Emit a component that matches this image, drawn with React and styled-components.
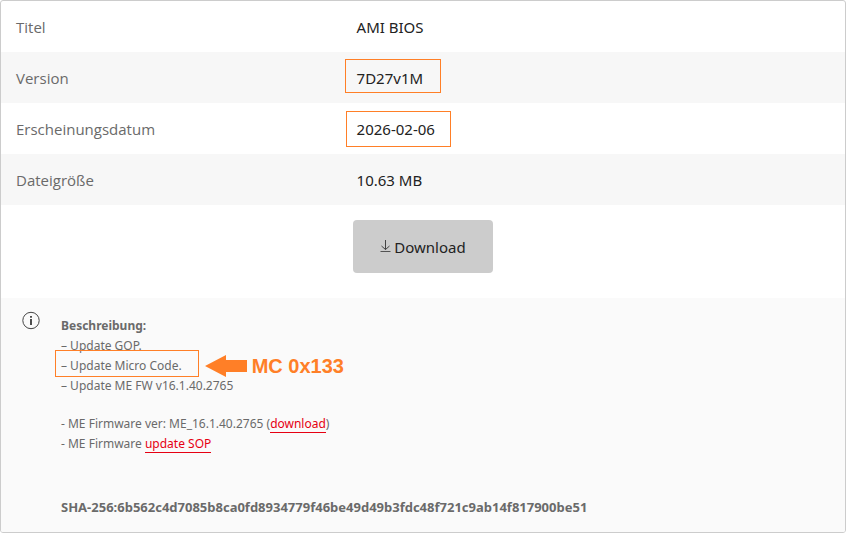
import React from "react"
import styled, { createGlobalStyle } from "styled-components"

const textColor = "#6a6a6a"
const marker = "#ff7f27"

const GlobalStyle = createGlobalStyle`
  * {
    box-sizing: border-box;
  }
  body {
    margin: 0;
    background-color: #fff;
    color: ${textColor};
    font-family: "Noto Sans", "Open Sans", sans-serif;
  }
`

const Card = styled.main`
  border: 1px solid #ccc;
  border-radius: 3px;
  overflow: hidden;
`

const SpecTable = styled.table`
  width: 100%;
  border-collapse: collapse;
  table-layout: fixed;
  font-size: 15px;
  line-height: 21px;
  th,
  td {
    padding: 16px 18px 14px;
    text-align: left;
    font-weight: normal;
  }
  th {
    width: 40%;
    padding-left: 15px;
    font-family: "Open Sans", "Noto Sans", sans-serif;
  }
  td {
    color: #222;
  }
  tr:nth-child(even) {
    background-color: #f7f7f7;
  }
`

const Marked = styled.span`
  position: relative;
  &::after {
    content: "";
    position: absolute;
    inset: ${(props) => props.$inset};
    border: 1px solid ${marker};
    pointer-events: none;
  }
`

const Actions = styled.div`
  display: flex;
  justify-content: center;
  padding: 15px 0 25px;
`

const DownloadButton = styled.button`
  display: flex;
  align-items: center;
  justify-content: center;
  gap: 3px;
  min-width: 140px;
  height: 53px;
  border: 0;
  border-radius: 4px;
  background-color: #ccc;
  color: #222;
  font-family: inherit;
  font-size: 15px;
  cursor: pointer;
`

const Description = styled.section`
  display: flex;
  align-items: flex-start;
  gap: 20px;
  padding: 13px 20px 15px;
  background-color: #fafafa;
  font-size: 12px;
  line-height: 20px;
`

const DescriptionText = styled.div`
  padding-top: 5px;
`

const Heading = styled.h2`
  margin: 0;
  font-size: 12px;
  font-weight: bold;
`

const Lines = styled.ul`
  margin: 0 0 18px;
  padding: 0;
  list-style: none;
`

const TextLink = styled.a`
  color: #e60012;
  text-decoration: none;
  border-bottom: 1px solid #e60012;
`

const Checksum = styled.p`
  margin: 43px 0 0;
  font-size: 13px;
  font-weight: bold;
  overflow-wrap: anywhere;
`

const Callout = styled.span`
  position: absolute;
  top: 50%;
  left: calc(100% + 23px);
  display: flex;
  align-items: center;
  gap: 5px;
  transform: translateY(-50%);
  color: ${marker};
  font-family: "Liberation Sans", Arial, sans-serif;
  font-size: 20px;
  font-weight: bold;
  white-space: nowrap;
`

const specs = [
  { label: "Titel", value: "AMI BIOS" },
  { label: "Version", value: "7D27v1M", inset: "-9px -18px -5px -12px" },
  { label: "Erscheinungsdatum", value: "2026-02-06", inset: "-8px -16px -8px -11px" },
  { label: "Dateigröße", value: "10.63 MB" },
]

const DownloadIcon = () => (
  <svg width="11" height="14" viewBox="0 0 11 14" fill="none" stroke="#333" aria-hidden="true">
    <path d="M5.5 0v9.5M1.5 6l4 3.5 4-3.5" strokeWidth="0.9" />
    <path d="M.5 11.5h10" strokeWidth="0.8" />
  </svg>
)

const InfoIcon = () => (
  <svg width="20" height="20" viewBox="0 0 20 20" fill="none" aria-hidden="true">
    <circle cx="10" cy="9.5" r="8.2" stroke="#444" />
    <path d="M10 8v6" stroke="#222" strokeWidth="1.6" />
    <path d="M10 5v1.8" stroke="#222" strokeWidth="1.6" />
  </svg>
)

const ArrowIcon = () => (
  <svg width="42" height="22" viewBox="0 0 42 22" fill={marker} aria-hidden="true">
    <path d="M0 11L21 0v5h21v12H21v5z" />
  </svg>
)

const App = () => (
  <>
    <GlobalStyle />
    <Card>
      <SpecTable>
        <tbody>
          {specs.map(({ label, value, inset }) => (
            <tr key={label}>
              <th scope="row">{label}</th>
              <td>{inset ? <Marked $inset={inset}>{value}</Marked> : value}</td>
            </tr>
          ))}
        </tbody>
      </SpecTable>
      <Actions>
        <DownloadButton type="button">
          <DownloadIcon />
          Download
        </DownloadButton>
      </Actions>
      <Description>
        <InfoIcon />
        <DescriptionText>
          <Heading>Beschreibung:</Heading>
          <Lines>
            <li>– Update GOP.</li>
            <li>
              <Marked $inset="-7px -17px -3px -6px">
                – Update Micro Code.
                <Callout>
                  <ArrowIcon />
                  MC 0x133
                </Callout>
              </Marked>
            </li>
            <li>– Update ME FW v16.1.40.2765</li>
          </Lines>
          <Lines>
            <li>
              - ME Firmware ver: ME_16.1.40.2765 (<TextLink href="#firmware">download</TextLink>)
            </li>
            <li>
              - ME Firmware <TextLink href="#sop">update SOP</TextLink>
            </li>
          </Lines>
          <Checksum>
            SHA-256:6b562c4d7085b8ca0fd8934779f46be49d49b3fdc48f721c9ab14f817900be51
          </Checksum>
        </DescriptionText>
      </Description>
    </Card>
  </>
)

export default App
